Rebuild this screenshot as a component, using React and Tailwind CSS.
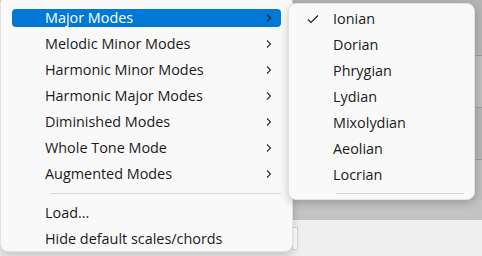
import React from "react"

const mainItems = [
    "Major Modes",
    "Melodic Minor Modes",
    "Harmonic Minor Modes",
    "Harmonic Major Modes",
    "Diminished Modes",
    "Whole Tone Mode",
    "Augmented Modes",
]

const modes = ["Ionian", "Dorian", "Phrygian", "Lydian", "Mixolydian", "Aeolian", "Locrian"]

function Chevron({ color }) {
    return (
        <svg width="8" height="10" viewBox="0 0 8 10" fill="none">
            <path d="M2 1.5 L5.5 5 L2 8.5" stroke={color} strokeWidth="1.1" />
        </svg>
    )
}

function Check() {
    return (
        <svg width="14" height="12" viewBox="0 0 14 12" fill="none">
            <path d="M2 6.5 L5 9.5 L12 2.5" stroke="#1f1f1f" strokeWidth="1.2" />
        </svg>
    )
}

export default function App() {
    return (
        <div className="relative w-[482px] h-[256px] overflow-hidden bg-[#efefef]" style={{ fontFamily: '"Open Sans", "Noto Sans", sans-serif' }}>
            {/* background app behind the menus */}
            <div className="flex flex-col">
                <div className="h-[200px] bg-[#a9a9a9] flex flex-col">
                    <div className="h-[56px] border-b border-[#9a9a9a] bg-[#b4b4b4]"></div>
                    <div className="h-[52px] border-b border-[#9a9a9a] bg-[#bdbdbd]"></div>
                    <div className="h-[52px] border-b border-[#9a9a9a] bg-[#b4b4b4]"></div>
                    <div className="flex-1 bg-[#bdbdbd]"></div>
                </div>
                <div className="h-[20px] bg-[#c3c3c3]"></div>
                <div className="h-[36px] bg-[#efefef] flex">
                    <div className="ml-[292px] mt-[7px] w-[6px] h-[23px] border border-[#d6d6d6] bg-white"></div>
                </div>
            </div>

            {/* main context menu */}
            <div className="absolute left-0 top-[-5px] w-[293px] h-[257px] bg-[#f9f9f9] rounded-[8px] border border-[#e2e2e2] shadow-[0_4px_10px_rgba(0,0,0,0.18)] pt-[13px] px-[11px] text-[14.4px] text-[#1b1b1b]">
                {mainItems.map((item, i) => (
                    <div
                        key={item}
                        className={i === 0
                            ? "h-[18px] mb-[8px] rounded-[4px] bg-[#0078d4] text-white flex items-center pl-[33px] pr-[8px]"
                            : "h-[18px] mb-[8px] flex items-center pl-[33px] pr-[8px]"}
                    >
                        <span className="leading-none">{item}</span>
                        <span className="ml-auto"><Chevron color={i === 0 ? "#1b1b1b" : "#2b2b2b"} /></span>
                    </div>
                ))}
                <div className="ml-[38px] mt-[10px] mb-[10px] border-t border-[#d6d6d6]"></div>
                <div className="h-[18px] mb-[8px] flex items-center pl-[33px]"><span className="leading-none">Load...</span></div>
                <div className="h-[18px] flex items-center pl-[33px]"><span className="leading-none">Hide default scales/chords</span></div>
            </div>

            {/* submenu */}
            <div className="absolute left-[288px] top-[3px] w-[187px] h-[197px] bg-[#f9f9f9] rounded-[8px] border border-[#e2e2e2] shadow-[0_3px_8px_rgba(0,0,0,0.2)] pt-[6px] text-[14.4px] text-[#1b1b1b]">
                {modes.map((m, i) => (
                    <div key={m} className="h-[18px] mb-[8px] flex items-center">
                        <span className="w-[44px] flex justify-center pl-[3px]">{i === 0 ? <Check /> : null}</span>
                        <span className="leading-none">{m}</span>
                    </div>
                ))}
                <div className="ml-[47px] mr-[10px] mt-[9px] border-t border-[#d6d6d6]"></div>
            </div>
        </div>
    )
}
